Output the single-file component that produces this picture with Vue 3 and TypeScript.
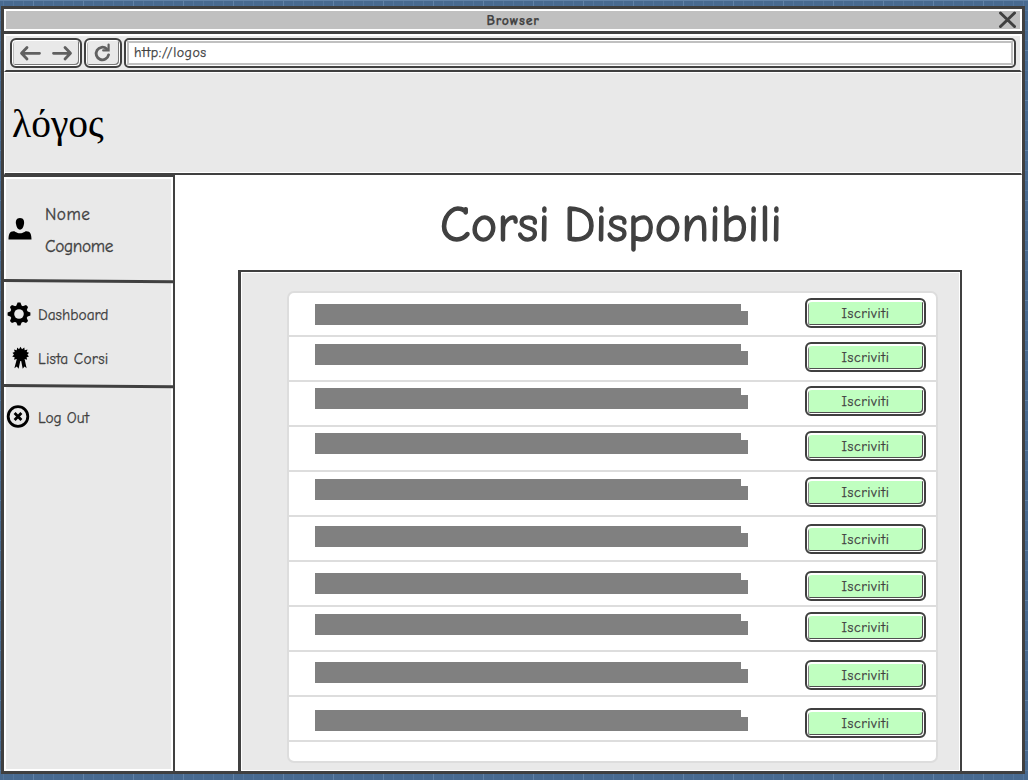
<script setup lang="ts">
interface Course { height: number; buttonTop: number; barTop: number }

const courses: Course[] = [
  { height: 44, buttonTop: 5, barTop: 11 },
  { height: 45, buttonTop: 5, barTop: 7 },
  { height: 45, buttonTop: 4, barTop: 6 },
  { height: 45, buttonTop: 4, barTop: 6 },
  { height: 45, buttonTop: 5, barTop: 7 },
  { height: 45, buttonTop: 7, barTop: 9 },
  { height: 45, buttonTop: 9, barTop: 11 },
  { height: 45, buttonTop: 5, barTop: 7 },
  { height: 45, buttonTop: 8, barTop: 10 },
  { height: 45, buttonTop: 11, barTop: 13 },
]
</script>

<template>
  <div class="desktop">
    <div class="window">
      <header class="titlebar">
        <span class="title">Browser</span>
        <svg class="close" width="18" height="18" viewBox="0 0 18 18">
          <path d="M2.5 2 L16.5 15.5 M16.5 2 L2.5 15.5" />
        </svg>
      </header>
      <div class="toolbar">
        <div class="tool nav">
          <svg width="68" height="26" viewBox="0 0 68 26">
            <path d="M27.5 13.3 H9.5 M15 7.5 L9.5 13.3 L15 19 M41.5 13.3 H58.5 M53 7.5 L58.5 13.3 L53 19" />
          </svg>
        </div>
        <div class="tool reload">
          <svg width="34" height="26" viewBox="0 0 34 26">
            <path class="arc" d="M20.6 8.8 A6.3 6.3 0 1 0 22.6 14.8" />
            <path class="tip" d="M22.6 4.6 V10.4 H17.2" />
          </svg>
        </div>
        <div class="url"><div class="url-in"><span>http://logos</span></div></div>
      </div>
      <div class="banner"><div class="logo">λόγος</div></div>
      <div class="body">
        <aside class="sidebar">
          <div class="user">
            <svg width="24" height="24" viewBox="0 0 24 24">
              <path d="M12 1 C16 1 16.4 4.4 16 7 C15.6 10.5 13.8 12.7 12 12.7 C10.2 12.7 8.4 10.5 8 7 C7.6 4.4 8 1 12 1 Z M.5 22.5 C.5 17.5 1.5 14.2 5.6 14.2 C7.4 14.2 8.4 16.2 12 16.2 C15.6 16.2 16.6 14.2 18.4 14.2 C22.5 14.2 23.5 17.5 23.5 22.5 Z" />
            </svg>
            <div class="name"><div class="t-nome">Nome</div><div class="t-cognome">Cognome</div></div>
          </div>
          <svg class="rule" width="169" height="5" viewBox="0 0 169 5"><path d="M0 1.5 L169 2.7" /></svg>
          <nav class="links">
            <div class="link">
              <svg width="24" height="24" viewBox="0 0 24 24">
                <g>
                  <path v-for="n in 4" :key="n" :transform="`rotate(${n * 45} 12 12)`" d="M9.2 4 L10.6 .6 H13.4 L14.8 4 V20 L13.4 23.4 H10.6 L9.2 20 Z" />
                  <circle cx="12" cy="12" r="8.8" />
                </g>
                <circle class="hole" cx="12" cy="12" r="4.8" />
              </svg>
              <span class="t-dash">Dashboard</span>
            </div>
            <div class="link second">
              <svg width="24" height="24" viewBox="0 0 24 24">
                <path d="M12.5 .8 L14 3.2 L16.3 1.6 L16.7 4.2 L19.5 3.5 L18.7 6 L21 6.8 L19.3 8.7 L21 10.5 L18.6 11.2 L19.1 13.7 L16.6 13 L18.6 22.2 L16.5 20.5 L14.7 22.8 L13.2 15 L12.3 15 L10.6 22.8 L8.8 20.5 L6.4 22.2 L8.8 13 L6 13.7 L6.7 11.2 L4.2 10.5 L6 8.7 L4.5 6.8 L6.7 6 L6 3.5 L8.7 4.2 L9.2 1.6 L11 3.2 Z" />
              </svg>
              <span class="t-lista">Lista Corsi</span>
            </div>
          </nav>
          <svg class="rule" width="169" height="5" viewBox="0 0 169 5"><path d="M0 1.5 L169 2.7" /></svg>
          <div class="link logout">
            <svg width="24" height="24" viewBox="0 0 24 24">
              <circle class="ring" cx="12" cy="11.5" r="9.8" />
              <path class="cross" d="M8.6 8.1 L15.4 14.9 M15.4 8.1 L8.6 14.9" />
            </svg>
            <span class="t-logout">Log Out</span>
          </div>
        </aside>
        <main class="content">
          <h1><span>Corsi Disponibili</span></h1>
          <section class="panel">
            <div class="card">
              <div v-for="(course, i) in courses" :key="i" class="row" :style="{ height: course.height + 'px' }">
                <div class="bar" :style="{ marginTop: course.barTop + 'px' }"></div>
                <button class="join" :style="{ marginTop: course.buttonTop + 'px' }"><span>Iscriviti</span></button>
              </div>
            </div>
          </section>
        </main>
      </div>
    </div>
  </div>
</template>

<style>
body { margin: 0; overflow: hidden; }
</style>
<style scoped>
* { box-sizing: border-box; }
.desktop {
  width: 1028px; height: 780px; padding: 6px 3px 6px 1px; overflow: hidden;
  background-color: #486a90;
  background-image:
    linear-gradient(90deg, #6182a7 1px, transparent 1px),
    linear-gradient(#6182a7 1px, transparent 1px),
    linear-gradient(90deg, #54759b 1px, transparent 1px),
    linear-gradient(#54759b 1px, transparent 1px);
  background-size: 50px 50px, 50px 50px, 10px 10px, 10px 10px;
  background-position: 33px 0, 0 0, 3px 0, 0 0;
  color: #404040; font-family: "Comic Sans MS", "Comic Neue", "Open Sans", sans-serif;
}
.window { width: 1024px; height: 768px; border: 3px solid #404040; background: #fff; display: flex; flex-direction: column; }
span, .name div, .logo { display: inline-block; white-space: nowrap; }
svg { display: block; flex: none; }
.titlebar { height: 25px; border-bottom: 3px solid #404040; padding: 2px; display: flex; background: #c0c0c0; background-clip: content-box; align-items: center; justify-content: center; position: relative; }
.title { font-size: 13.8px; font-weight: 700; line-height: 18px; letter-spacing: .75px; padding-top: 2px; -webkit-text-stroke: .25px #404040; }
.close { position: absolute; right: 6px; top: 2px; fill: none; stroke: #404040; stroke-width: 3; stroke-linecap: round; }
.toolbar { height: 38px; border: 2px solid #fff; border-bottom: 2px solid #404040; background: #e9e9e9; padding: 2px 4px; display: flex; gap: 2px; }
.tool { height: 30px; border: 2px solid #404040; border-radius: 6px; background: #e9e9e9; box-shadow: inset 1px 1px #fff, inset -1px -1px #fff, inset 2px 0 #bbb, inset -2px -2px #777; }
.tool svg { fill: none; stroke: #606060; stroke-width: 2.8; stroke-linecap: round; stroke-linejoin: round; }
.tool .arc { stroke-width: 2.8; }
.tool .tip { stroke-width: 2.2; stroke-linejoin: miter; }
.nav { width: 72px; }
.reload { width: 38px; }
.url { width: 892px; height: 30px; border: 2px solid #404040; border-radius: 5px; background: #fff; padding: 1px; }
.url-in { height: 24px; border: 2px solid #c0c0c0; padding-left: 5px; font-size: 14px; line-height: 20px; letter-spacing: .45px; -webkit-text-stroke: .25px #404040; }
.banner { height: 103px; border: 1px solid #fff; border-bottom: 2px solid #404040; background: #e9e9e9; box-shadow: inset 0 -1px #fff; padding: 23px 7px; }
.logo { color: #000; font: 39.5px/56px "Liberation Serif", serif; }
.body { flex: 1; display: flex; min-height: 0; }
.sidebar { width: 171px; border-top: 2px solid #404040; border-right: 2px solid #404040; background: #e9e9e9; box-shadow: inset 2px 2px #fff, inset -2px -2px #fff; }
.user { height: 102px; padding: 0 0 0 3.5px; display: flex; }
.user svg { margin-top: 40px; }
.name { margin-left: 13.5px; padding-top: 21px; font-size: 17.3px; line-height: 32px; display: flex; flex-direction: column; align-items: flex-start; -webkit-text-stroke: .3px #404040; }
.t-nome { letter-spacing: .5px; }
.t-cognome { letter-spacing: -.35px; }
.rule { fill: none; stroke: #404040; stroke-width: 3; }
.links { height: 100px; padding-top: 18px; }
.link { height: 24px; padding-left: 3px; display: flex; align-items: center; font-size: 15.4px; line-height: 24px; -webkit-text-stroke: .25px #404040; }
.link span { margin-left: 7px; padding-top: 1px; }
.second { margin-top: 20px; padding-left: 4px; }
.second span { margin-left: 6px; }
.t-lista { letter-spacing: .2px; }
.logout { margin-top: 16px; padding-left: 2px; }
.logout span { margin-left: 8px; }
.hole { fill: #e9e9e9; }
.ring { fill: none; stroke: #000; stroke-width: 2.8; }
.cross { stroke: #000; stroke-width: 2.8; }
.content { width: 847px; height: 596px; padding-left: 63px; }
h1 { margin: 0; height: 95px; width: 746px; font-size: 50px; line-height: 101px; font-weight: 400; text-align: center; letter-spacing: .2px; word-spacing: -3px; -webkit-text-stroke: 1.3px #404040; }
.panel { width: 724px; height: 501px; border: 2px solid #404040; border-left-width: 3px; border-bottom: 0; background: #e9e9e9; box-shadow: inset 1px 1px #fff, inset -1px -1px #fff; padding: 19px 22px 0 46px; }
.card { width: 651px; height: 472px; border: 2px solid #ddd; border-radius: 7px; background: #fff; }
.row { border-bottom: 2px solid #ddd; display: flex; align-items: flex-start; padding-left: 26px; }
.bar { width: 433px; height: 21px; background: #808080; clip-path: polygon(0 0, 426px 0, 426px 7px, 433px 7px, 433px 21px, 0 21px); }
.join { width: 121px; height: 30px; margin: 0 0 0 57px; padding: 1px 0 0; border: 2px solid #404040; border-radius: 6px; background: #c0ffc0; box-shadow: inset 1px 2px #fff, inset -1px -1px #fff, inset 2px 0 #888, inset -2px -2px #505050; color: #404040; font: 14px/25px "Comic Sans MS", "Comic Neue", "Open Sans", sans-serif; letter-spacing: .55px; -webkit-text-stroke: .25px #404040; }
</style>
